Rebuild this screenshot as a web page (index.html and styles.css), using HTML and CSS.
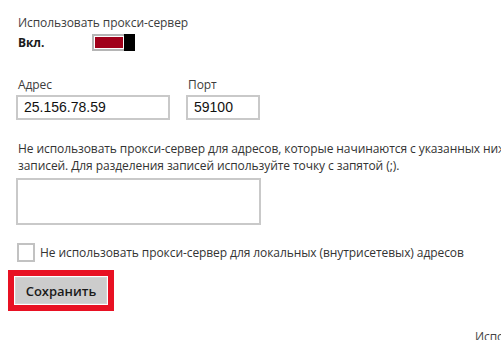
FILE: index.html
```html
<!DOCTYPE html>
<html lang="ru">
<head>
	<meta charset="UTF-8">
	<title>Прокси-сервер</title>
	<link rel="stylesheet" href="styles.css">
</head>
<body>
	<main class="page">
		<section class="switch-row">
			<div class="label">Использовать прокси-сервер</div>
			<div class="state">
				<span class="state-text">Вкл.</span>
				<span class="toggle"><span class="toggle-track"></span><span class="toggle-thumb"></span></span>
			</div>
		</section>
		<section class="fields">
			<div class="field">
				<div class="label">Адрес</div>
				<div class="input input-address">25.156.78.59</div>
			</div>
			<div class="field">
				<div class="label">Порт</div>
				<div class="input input-port">59100</div>
			</div>
		</section>
		<p class="note">Не использовать прокси-сервер для адресов, которые начинаются с указанных ниже записей. Для разделения записей используйте точку с запятой (;).</p>
		<div class="textarea"></div>
		<label class="check">
			<span class="check-box"></span>
			<span>Не использовать прокси-сервер для локальных (внутрисетевых) адресов</span>
		</label>
		<div class="highlight">
			<button class="btn">Сохранить</button>
		</div>
		<div class="tail">Использовать</div>
	</main>
</body>
</html>
```
FILE: styles.css
```css
html, body {
	margin: 0;
	background: #fff;
	overflow: hidden;
	height: 340px;
}
.page {
	font-family: "Open Sans", "Noto Sans", sans-serif;
	font-size: 12px;
	letter-spacing: -0.08px;
	color: #333;
	padding: 14px 0 0 18px;
	width: 483px;
	height: 326px;
	overflow: hidden;
	white-space: nowrap;
}
.label {color: #3c3c3c; line-height: 18px;}
.state {
	display: flex;
	align-items: center;
	margin-top: 2px;
	height: 17px;
}
.state-text {
	font-weight: 700;
	color: #1a1a1a;
	width: 74px;
}
.toggle {
	display: flex;
	width: 43px;
	height: 17px;
	box-sizing: border-box;
}
.toggle-track {
	flex: 1;
	border: 2px solid #b5b5b5;
	border-right: 0;
	background: #a1001a;
	box-shadow: inset 0 0 0 1px #fff;
}
.toggle-thumb {
	width: 11px;
	background: #000;
}
.fields {
	display: flex;
	gap: 16px;
	margin-top: 25px;
	margin-left: -2px;
}
.fields .label {padding-left: 2px; margin-bottom: 1px;}
.input {
	box-sizing: border-box;
	height: 25px;
	border: 2px solid #c9c9c9;
	padding: 0 6px;
	line-height: 21px;
	color: #111;
	font-family: "Liberation Sans", sans-serif;
	font-size: 14px;
	letter-spacing: 0;
}
.input-address {width: 154px;}
.input-port {width: 74px;}
.note {
	margin: 20px 0 0;
	line-height: 17px;
	white-space: normal;
	width: 540px;
}
.textarea {
	box-sizing: border-box;
	width: 245px;
	height: 47px;
	border: 2px solid #c9c9c9;
	margin: 4px 0 0 -2px;
}
.check {
	display: flex;
	align-items: center;
	gap: 5px;
	margin-top: 18px;
	margin-left: -1px;
}
.check-box {
	box-sizing: border-box;
	width: 18px;
	height: 19px;
	border: 2px solid #c2c2c2;
}
.highlight {
	display: inline-block;
	border: 6px solid #e81123;
	padding: 1px;
	margin: 8px 0 0 -10px;
}
.btn {
	display: block;
	width: 92px;
	height: 27px;
	border: 1px solid #d4d4d4;
	background: #cccccc;
	font-family: "Open Sans", sans-serif;
	font-size: 13px;
	font-weight: 600;
	color: #1a1a1a;
	padding: 0;
}
.tail {
	margin: 17px 0 0 457px;
	color: #444;
}
```
